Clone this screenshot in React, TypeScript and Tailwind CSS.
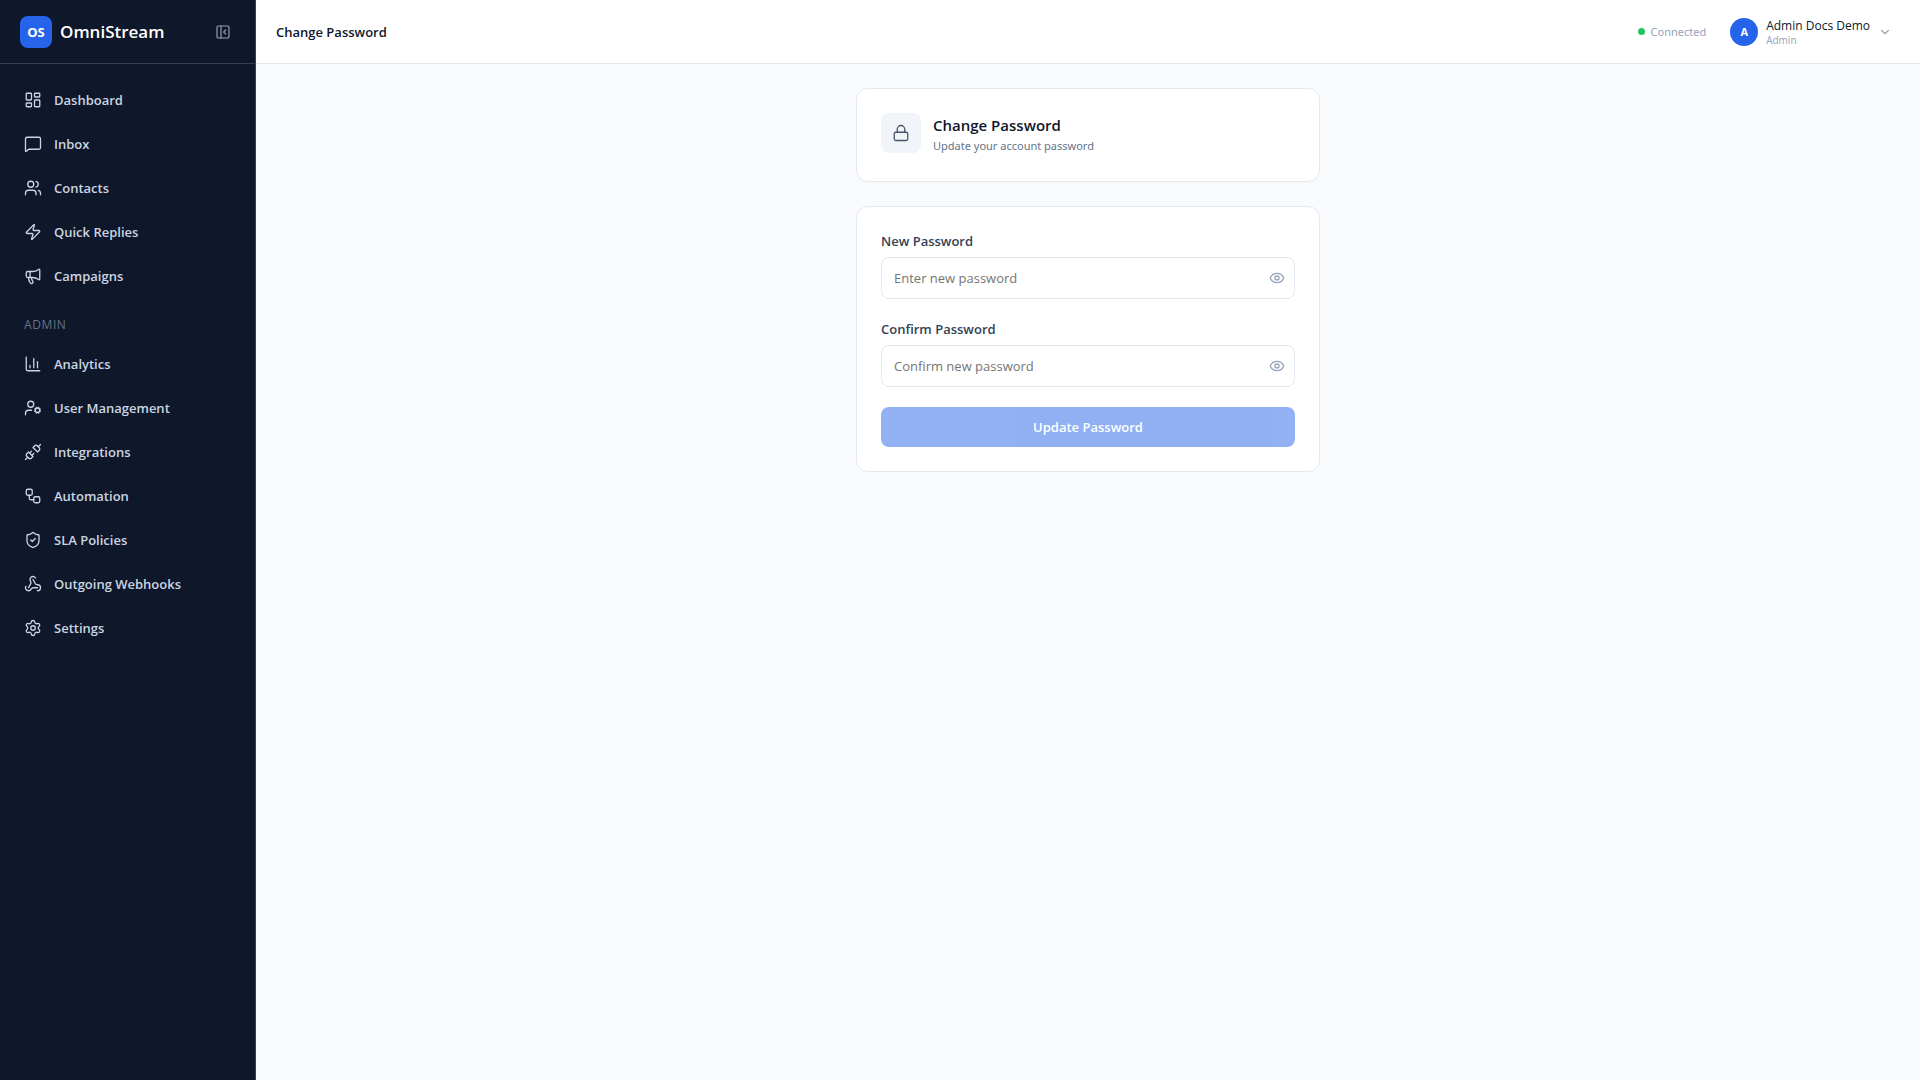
import { useState } from "react";
import {
  ChartColumn,
  ChevronDown,
  Eye,
  EyeOff,
  LayoutDashboard,
  Lock,
  Megaphone,
  MessageSquare,
  PanelLeftClose,
  Settings,
  ShieldCheck,
  Unplug,
  UserCog,
  Users,
  Webhook,
  Workflow,
  Zap,
  type LucideIcon,
} from "lucide-react";

interface NavItem {
  label: string;
  icon: LucideIcon;
}

const mainItems: NavItem[] = [
  { label: "Dashboard", icon: LayoutDashboard },
  { label: "Inbox", icon: MessageSquare },
  { label: "Contacts", icon: Users },
  { label: "Quick Replies", icon: Zap },
  { label: "Campaigns", icon: Megaphone },
];

const adminItems: NavItem[] = [
  { label: "Analytics", icon: ChartColumn },
  { label: "User Management", icon: UserCog },
  { label: "Integrations", icon: Unplug },
  { label: "Automation", icon: Workflow },
  { label: "SLA Policies", icon: ShieldCheck },
  { label: "Outgoing Webhooks", icon: Webhook },
  { label: "Settings", icon: Settings },
];

function NavList({ items }: { items: NavItem[] }) {
  return (
    <ul className="flex flex-col gap-1">
      {items.map(({ label, icon: Icon }) => (
        <li key={label}>
          <a
            href="#"
            className="flex h-10 items-center gap-3 rounded-lg px-3 text-[13px] leading-5 font-semibold text-[#cbd5e1] hover:bg-slate-800 hover:text-white"
          >
            <Icon size={18} strokeWidth={1.75} />
            {label}
          </a>
        </li>
      ))}
    </ul>
  );
}

function Sidebar() {
  return (
    <aside className="flex w-64 shrink-0 flex-col border-r border-[#334155] bg-[#0f172a]">
      <div className="flex h-16 items-center justify-between border-b border-[#334155] pl-5 pr-4">
        <div className="flex items-center gap-2">
          <div className="flex h-8 w-8 items-center justify-center rounded-lg bg-[#2563eb] text-[13px] leading-5 font-bold text-white">
            OS
          </div>
          <span className="text-[17px] leading-7 font-semibold text-white">
            OmniStream
          </span>
        </div>
        <button
          type="button"
          aria-label="Collapse sidebar"
          className="rounded-md p-2 text-[#94a3b8] hover:text-white"
        >
          <PanelLeftClose size={16} strokeWidth={1.75} />
        </button>
      </div>
      <nav className="px-3 py-4">
        <NavList items={mainItems} />
        <div className="px-3 pb-2.5 pt-5 text-xs leading-[18px] font-medium tracking-wider text-[#64748b]">
          ADMIN
        </div>
        <NavList items={adminItems} />
      </nav>
    </aside>
  );
}

function Header() {
  return (
    <header className="flex h-16 shrink-0 items-center justify-between border-b border-[#e2e8f0] bg-white pl-5 pr-7">
      <h1 className="text-[13px] leading-5 font-semibold text-[#0f172a]">
        Change Password
      </h1>
      <div className="flex items-center gap-6">
        <div className="flex items-center gap-1.5">
          <span className="h-[7px] w-[7px] rounded-full bg-[#22c55e]" />
          <span className="font-['Noto_Sans',sans-serif] text-[11px] leading-[18px] text-[#94a3b8]">
            Connected
          </span>
        </div>
        <button type="button" className="flex items-center gap-2 text-left">
          <span className="flex h-7 w-7 items-center justify-center rounded-full bg-[#2563eb] text-[11px] leading-4 font-bold text-white">
            A
          </span>
          <span className="flex flex-col">
            <span className="text-xs leading-4 font-medium text-[#0f172a]">
              Admin Docs Demo
            </span>
            <span className="text-[10px] leading-3 text-[#94a3b8]">Admin</span>
          </span>
          <ChevronDown size={14} className="text-[#94a3b8]" />
        </button>
      </div>
    </header>
  );
}

interface PasswordFieldProps {
  id: string;
  label: string;
  placeholder: string;
  value: string;
  onChange: (value: string) => void;
}

function PasswordField({
  id,
  label,
  placeholder,
  value,
  onChange,
}: PasswordFieldProps) {
  const [visible, setVisible] = useState(false);

  return (
    <div>
      <label
        htmlFor={id}
        className="mb-1.5 block text-[13px] leading-5 font-semibold text-[#334155]"
      >
        {label}
      </label>
      <div className="relative">
        <input
          id={id}
          type={visible ? "text" : "password"}
          placeholder={placeholder}
          value={value}
          onChange={(e) => onChange(e.target.value)}
          className="block w-full rounded-lg border border-[#e2e8f0] bg-white py-2.5 pl-3 pr-10 text-[13px] leading-5 text-[#0f172a] outline-none placeholder:text-[#757575] focus:border-[#2563eb]"
        />
        <button
          type="button"
          aria-label={visible ? "Hide password" : "Show password"}
          onClick={() => setVisible(!visible)}
          className="absolute inset-y-0 right-0 px-2.5 text-[#94a3b8]"
        >
          {visible ? <EyeOff size={16} /> : <Eye size={16} />}
        </button>
      </div>
    </div>
  );
}

function App() {
  const [password, setPassword] = useState("");
  const [confirm, setConfirm] = useState("");
  const canSubmit = password !== "" && password === confirm;

  return (
    <div className="flex min-h-screen bg-[#f8fafc] font-['Segoe_UI','Open_Sans','Noto_Sans',sans-serif]">
      <Sidebar />
      <div className="flex min-w-0 flex-1 flex-col">
        <Header />
        <main className="mx-auto flex w-full max-w-lg flex-col gap-6 p-6">
          <section className="flex items-start gap-3 rounded-xl border border-[#e2e8f0] bg-white px-6 pb-6.5 pt-6">
            <div className="flex h-10 w-10 items-center justify-center rounded-lg bg-[#f1f5f9] text-[#475569]">
              <Lock size={18} strokeWidth={1.75} />
            </div>
            <div>
              <h2 className="text-[15px] leading-6 font-semibold text-[#0f172a]">
                Change Password
              </h2>
              <p className="font-['Noto_Sans',sans-serif] text-[11px] leading-[18px] text-[#64748b]">
                Update your account password
              </p>
            </div>
          </section>
          <form
            onSubmit={(e) => e.preventDefault()}
            className="flex flex-col gap-5 rounded-xl border border-[#e2e8f0] bg-white p-6"
          >
            <PasswordField
              id="new-password"
              label="New Password"
              placeholder="Enter new password"
              value={password}
              onChange={setPassword}
            />
            <PasswordField
              id="confirm-password"
              label="Confirm Password"
              placeholder="Confirm new password"
              value={confirm}
              onChange={setConfirm}
            />
            <button
              type="submit"
              disabled={!canSubmit}
              className="h-10 rounded-lg bg-[#2563eb] text-[13px] leading-5 font-semibold text-white disabled:opacity-50"
            >
              Update Password
            </button>
          </form>
        </main>
      </div>
    </div>
  );
}

export default App;
